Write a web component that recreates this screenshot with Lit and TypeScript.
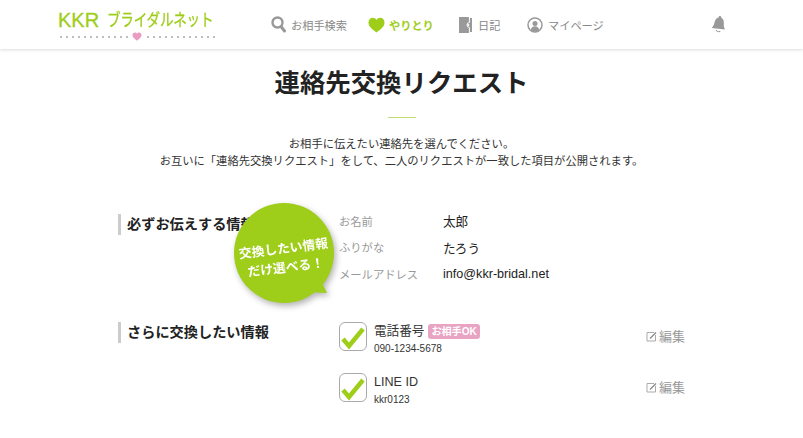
import { LitElement, html, css, svg } from 'lit';
import { customElement } from 'lit/decorators.js';

const searchIcon = svg`<circle cx="6.500" cy="6.500" r="5" fill="none" stroke="#999" stroke-width="2.400"/><path d="M10 10.500 13.500 15" stroke="#999" stroke-width="3" stroke-linecap="round"/>`;
const heartPath = 'M8.5 15.500C3 11.500.5 9 .5 5.500.5 2.600 2.600.8 4.800.8c1.600 0 2.900.8 3.700 2.200C9.300 1.600 10.600.8 12.200.8c2.200 0 4.300 1.800 4.300 4.700 0 3.500-2.500 6-8 10Z';
const diaryIcon = svg`<path d="M0 0h10v16H0z" fill="#999"/><path d="M10 1h3v14h-3z" fill="#999"/><path d="M10.400 0v5.600a2.400 2.400 0 0 0 0 4.800V16" fill="none" stroke="#fff" stroke-width="1"/><circle cx="9.400" cy="8" r="1" fill="#fff"/>`;
const userIcon = svg`<circle cx="8" cy="8" r="7" fill="none" stroke="#999" stroke-width="1.500"/><circle cx="8" cy="6.400" r="2.500" fill="#999"/><path d="M3.800 13c.4-2.600 2-3.800 4.200-3.800s3.800 1.200 4.200 3.800A6.600 6.600 0 0 1 8 14.400 6.600 6.600 0 0 1 3.800 13Z" fill="#999"/>`;

@customElement('app-root')
export class AppRoot extends LitElement {
  static styles = css`
    :host {
      display: block;
      position: relative;
      height: 438px;
      overflow: hidden;
      background: #fff;
      color: #222;
      font-family: 'Liberation Sans', 'Noto Sans CJK JP', sans-serif;
    }
    header {
      display: flex;
      align-items: center;
      height: 49px;
      padding: 0 0 0 58px;
      box-shadow: 0 1px 3px rgba(0, 0, 0, 0.14);
    }
    .logo {
      display: flex;
      flex-direction: column;
      width: 157px;
      margin-right: 56px;
      margin-top: 1px;
    }
    .logo-text {
      display: flex;
      align-items: center;
      color: #9ecd1a;
      line-height: 21px;
      white-space: nowrap;
    }
    .logo-text b {
      flex: none;
      font-weight: 400;
      font-size: 20px;
      width: 49px;
      -webkit-text-stroke: 0.3px #9ecd1a;
    }
    .logo-text span {
      flex: none;
      display: inline-block;
      font-size: 17px;
      transform: scaleX(0.8);
      transform-origin: left center;
      letter-spacing: -0.3px;
      -webkit-text-stroke: 0.3px #9ecd1a;
    }
    .logo-line {
      display: flex;
      align-items: center;
      gap: 3px;
      margin-top: 2px;
      height: 8px;
    }
    .dots {
      flex: 1;
      height: 2px;
      background: radial-gradient(circle, #bbb 0.7px, transparent 1px) 0 0 / 6px 2px;
    }
    nav {
      display: flex;
      align-items: center;
      color: #888;
      font-size: 11.200px;
    }
    .item {
      display: flex;
      align-items: center;
      gap: 5px;
      white-space: nowrap;
    }
    .item svg {
      display: block;
    }
    .search { width: 97px; }
    .talk { width: 91px; gap: 4px; color: #9ecd1a; font-weight: 700; }
    .diary { width: 68px; gap: 6px; }
    .bell {
      margin-left: auto;
      margin-right: 77px;
      display: block;
      transform: rotate(8deg);
    }
    main {
      display: flex;
      flex-direction: column;
      align-items: center;
    }
    h1 {
      margin: 16px 0 0;
      font-size: 25.400px;
      line-height: 36px;
      font-weight: 700;
      color: #222;
    }
    .rule {
      width: 28px;
      height: 1px;
      margin: 16px 0 0;
      background: #bfdc6c;
    }
    .lead {
      margin: 18px 0 0;
      font-size: 11.300px;
      line-height: 17px;
      text-align: center;
      color: #333;
    }
    .sections {
      align-self: stretch;
      margin: 44px 0 0 118px;
      display: flex;
      flex-direction: column;
      gap: 38px;
      width: 567px;
    }
    section {
      display: grid;
      grid-template-columns: 221px 1fr;
    }
    h2 {
      margin: 0;
      align-self: start;
      border-left: 3px solid #ccc;
      padding-left: 6px;
      font-size: 14.200px;
      line-height: 21px;
      font-weight: 700;
      color: #222;
      white-space: nowrap;
    }
    .fixed {
      display: flex;
      flex-direction: column;
      gap: 5.500px;
      margin-top: -4px;
    }
    .fixed div {
      display: grid;
      grid-template-columns: 104px 1fr;
      align-items: center;
      height: 21px;
      font-size: 12.600px;
      color: #222;
    }
    .fixed span {
      color: #999;
      font-size: 11.300px;
    }
    .checks {
      display: flex;
      flex-direction: column;
      gap: 17px;
    }
    .check {
      display: flex;
      align-items: flex-start;
    }
    .box {
      width: 28px;
      height: 29px;
      border: 1px solid #aaa;
      border-radius: 6px;
      box-sizing: border-box;
      margin-right: 7px;
      flex: none;
    }
    .box svg {
      display: block;
    }
    .text {
      padding-top: 1px;
    }
    .name {
      display: flex;
      align-items: center;
      gap: 4px;
      font-size: 12.600px;
      line-height: 16px;
      color: #333;
    }
    .ok {
      background: #e9a3c3;
      color: #fff;
      font-size: 10.100px;
      font-weight: 700;
      line-height: 15px;
      padding: 0 3px;
      border-radius: 3px;
    }
    .value {
      font-size: 10px;
      line-height: 14px;
      margin-top: 3px;
      color: #333;
    }
    .edit {
      margin-left: auto;
      display: flex;
      align-items: center;
      gap: 2px;
      color: #999;
      font-size: 13px;
      line-height: 29px;
    }
    .bubble {
      position: absolute;
      left: 234px;
      top: 203px;
      width: 100px;
      height: 100px;
      filter: drop-shadow(2px 3px 3px rgba(0, 0, 0, 0.3));
    }
    .bubble svg {
      position: absolute;
      inset: 0;
      overflow: visible;
    }
    .bubble p {
      position: relative;
      box-sizing: border-box;
      height: 100px;
      margin: 0;
      padding-top: 36px;
      text-align: center;
      color: #fff;
      font-size: 12.800px;
      font-weight: 700;
      line-height: 19px;
      transform: rotate(-7deg);
      white-space: nowrap;
    }
  `;

  render() {
    return html`
      <header>
        <div class="logo">
          <div class="logo-text"><b>KKR</b><span>ブライダルネット</span></div>
          <div class="logo-line">
            <span class="dots"></span>
            <svg width="10" height="9" viewBox="0 0 17 16"><path d=${heartPath} fill="#ea9cc0"/></svg>
            <span class="dots"></span>
          </div>
        </div>
        <nav>
          <div class="item search">
            <svg width="15" height="17" viewBox="0 0 15 17">${searchIcon}</svg>お相手検索
          </div>
          <div class="item talk">
            <svg width="17" height="16" viewBox="0 0 17 16"><path d=${heartPath} fill="#9ecd1a"/></svg>やりとり
          </div>
          <div class="item diary">
            <svg width="13" height="16" viewBox="0 0 13 16">${diaryIcon}</svg>日記
          </div>
          <div class="item">
            <svg width="16" height="16" viewBox="0 0 16 16">${userIcon}</svg>マイページ
          </div>
        </nav>
        <svg class="bell" width="14" height="17" viewBox="0 0 14 17">
          <path d="M7 0c1 0 1.400.7 1.500 1.600C11 2.400 11.600 5 11.800 8c.1 2 .9 3.300 2 4.500L.2 13C1.400 11.500 2.100 10 2.200 8c.2-3 .8-5.600 3.300-6.400C5.600.7 6 0 7 0Z" fill="#999"/>
          <path d="M5 14.200c.7 1.800 3 2 4.200.7" fill="none" stroke="#999" stroke-width="1"/>
        </svg>
      </header>
      <main>
        <h1>連絡先交換リクエスト</h1>
        <div class="rule"></div>
        <p class="lead">
          お相手に伝えたい連絡先を選んでください。<br />
          お互いに「連絡先交換リクエスト」をして、二人のリクエストが一致した項目が公開されます。
        </p>
        <div class="sections">
          <section>
            <h2>必ずお伝えする情報</h2>
            <div class="fixed">
              <div><span>お名前</span>太郎</div>
              <div><span>ふりがな</span>たろう</div>
              <div><span>メールアドレス</span>info@kkr-bridal.net</div>
            </div>
          </section>
          <section>
            <h2>さらに交換したい情報</h2>
            <div class="checks">
              ${this.renderCheck('電話番号', '090-1234-5678', true)}
              ${this.renderCheck('LINE ID', 'kkr0123', false)}
            </div>
          </section>
        </div>
      </main>
      <div class="bubble">
        <svg width="100" height="100" viewBox="0 0 100 100">
          <circle cx="50" cy="50" r="50" fill="#9ecd1a"/>
          <path d="M86 76 93 90 74 89Z" fill="#9ecd1a"/>
        </svg>
        <p>交換したい情報<br />だけ選べる！</p>
      </div>
    `;
  }

  private renderCheck(name: string, value: string, ok: boolean) {
    return html`
      <div class="check">
        <div class="box">
          <svg width="26" height="27" viewBox="0 0 26 27">
            <path d="M3 16 9 23 23 6" fill="none" stroke="#9ecd1a" stroke-width="4.500"/>
          </svg>
        </div>
        <div class="text">
          <div class="name">${name}${ok ? html`<span class="ok">お相手OK</span>` : ''}</div>
          <div class="value">${value}</div>
        </div>
        <div class="edit">
          <svg width="11" height="11" viewBox="0 0 11 11">
            <path d="M8 1.500H1v8.500h8.500V4" fill="none" stroke="#aaa" stroke-width="1"/>
            <path d="M4 7.500 10 1.500" stroke="#888" stroke-width="1.200"/>
          </svg>
          編集
        </div>
      </div>
    `;
  }
}
